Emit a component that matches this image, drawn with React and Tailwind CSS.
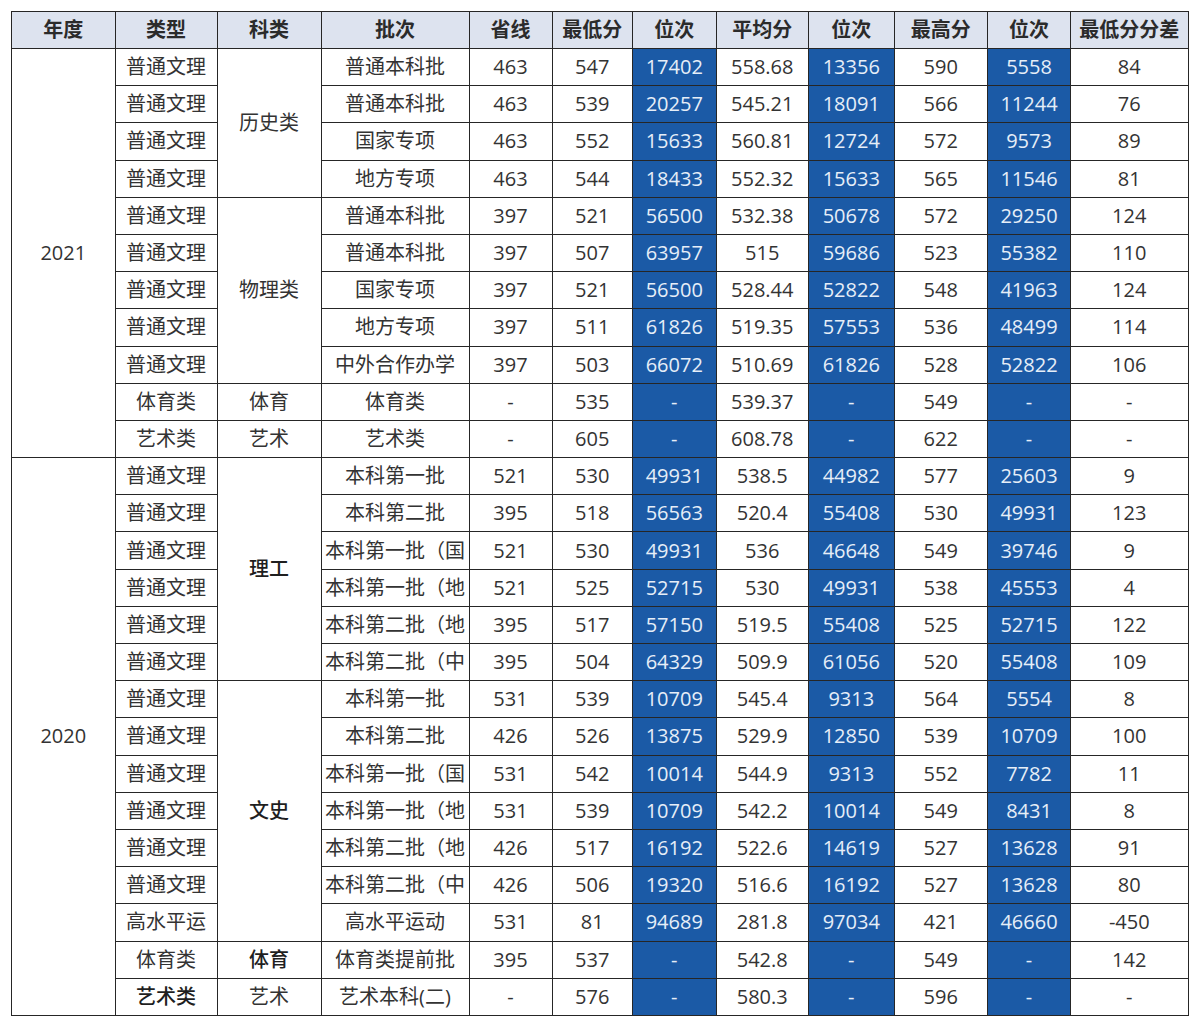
import React from "react";

// each row: [type, category|null (covered by rowspan), batch, line, min, rank1, avg, rank2, max, rank3, diff]
const rows2021 = [
  ["普通文理", { text: "历史类", span: 4 }, "普通本科批", "463", "547", "17402", "558.68", "13356", "590", "5558", "84"],
  ["普通文理", null, "普通本科批", "463", "539", "20257", "545.21", "18091", "566", "11244", "76"],
  ["普通文理", null, "国家专项", "463", "552", "15633", "560.81", "12724", "572", "9573", "89"],
  ["普通文理", null, "地方专项", "463", "544", "18433", "552.32", "15633", "565", "11546", "81"],
  ["普通文理", { text: "物理类", span: 5 }, "普通本科批", "397", "521", "56500", "532.38", "50678", "572", "29250", "124"],
  ["普通文理", null, "普通本科批", "397", "507", "63957", "515", "59686", "523", "55382", "110"],
  ["普通文理", null, "国家专项", "397", "521", "56500", "528.44", "52822", "548", "41963", "124"],
  ["普通文理", null, "地方专项", "397", "511", "61826", "519.35", "57553", "536", "48499", "114"],
  ["普通文理", null, "中外合作办学", "397", "503", "66072", "510.69", "61826", "528", "52822", "106"],
  ["体育类", { text: "体育", span: 1 }, "体育类", "-", "535", "-", "539.37", "-", "549", "-", "-"],
  ["艺术类", { text: "艺术", span: 1 }, "艺术类", "-", "605", "-", "608.78", "-", "622", "-", "-"],
];

const rows2020 = [
  ["普通文理", { text: "理工", span: 6, bold: true }, "本科第一批", "521", "530", "49931", "538.5", "44982", "577", "25603", "9"],
  ["普通文理", null, "本科第二批", "395", "518", "56563", "520.4", "55408", "530", "49931", "123"],
  ["普通文理", null, "本科第一批（国", "521", "530", "49931", "536", "46648", "549", "39746", "9"],
  ["普通文理", null, "本科第一批（地", "521", "525", "52715", "530", "49931", "538", "45553", "4"],
  ["普通文理", null, "本科第二批（地", "395", "517", "57150", "519.5", "55408", "525", "52715", "122"],
  ["普通文理", null, "本科第二批（中", "395", "504", "64329", "509.9", "61056", "520", "55408", "109"],
  ["普通文理", { text: "文史", span: 7, bold: true }, "本科第一批", "531", "539", "10709", "545.4", "9313", "564", "5554", "8"],
  ["普通文理", null, "本科第二批", "426", "526", "13875", "529.9", "12850", "539", "10709", "100"],
  ["普通文理", null, "本科第一批（国", "531", "542", "10014", "544.9", "9313", "552", "7782", "11"],
  ["普通文理", null, "本科第一批（地", "531", "539", "10709", "542.2", "10014", "549", "8431", "8"],
  ["普通文理", null, "本科第二批（地", "426", "517", "16192", "522.6", "14619", "527", "13628", "91"],
  ["普通文理", null, "本科第二批（中", "426", "506", "19320", "516.6", "16192", "527", "13628", "80"],
  ["高水平运", null, "高水平运动", "531", "81", "94689", "281.8", "97034", "421", "46660", "-450"],
  ["体育类", { text: "体育", span: 1, bold: true }, "体育类提前批", "395", "537", "-", "542.8", "-", "549", "-", "142"],
  [{ text: "艺术类", bold: true }, { text: "艺术", span: 1 }, "艺术本科(二)", "-", "576", "-", "580.3", "-", "596", "-", "-"],
];

const headers = ["年度", "类型", "科类", "批次", "省线", "最低分", "位次", "平均分", "位次", "最高分", "位次", "最低分分差"];

const cell = "border border-[#262626] text-center align-middle whitespace-nowrap overflow-hidden p-0";
const blue = "bg-[#1b5aa6] text-[#e6eef8]";

function Block({ year, rows }) {
  return rows.map((r, i) => {
    const type = typeof r[0] === "string" ? { text: r[0] } : r[0];
    const cat = r[1];
    const rest = r.slice(2);
    return (
      <tr key={year + i} className="h-[37.2px]">
        {i === 0 && (
          <td rowSpan={rows.length} className={cell}>
            {year}
          </td>
        )}
        <td className={`${cell} ${type.bold ? "font-medium text-[#1f1f1f]" : ""}`}>{type.text}</td>
        {cat && (
          <td rowSpan={cat.span} className={`${cell} ${cat.bold ? "font-medium text-[#1f1f1f]" : ""}`}>
            {cat.text}
          </td>
        )}
        {rest.map((v, j) => (
          <td key={j} className={`${cell} ${j === 3 || j === 5 || j === 7 ? blue : ""}`}>
            {v}
          </td>
        ))}
      </tr>
    );
  });
}

export default function App() {
  return (
    <div className="bg-white w-[1200px] h-[1027px] pt-[11px] pl-[11px] font-['Open_Sans','Noto_Sans_CJK_SC',sans-serif] text-[20px] leading-none text-[#333]">
      <table className="table-fixed border-collapse w-[1177px] border-[1.5px] border-[#262626]">
        <colgroup>
          <col className="w-[103.5px]" />
          <col className="w-[102px]" />
          <col className="w-[104px]" />
          <col className="w-[148px]" />
          <col className="w-[83px]" />
          <col className="w-[80.5px]" />
          <col className="w-[83.5px]" />
          <col className="w-[92.5px]" />
          <col className="w-[85.5px]" />
          <col className="w-[93.5px]" />
          <col className="w-[83px]" />
          <col className="w-[117.5px]" />
        </colgroup>
        <thead>
          <tr className="h-[37px] bg-[#dde3ef]">
            {headers.map((h, i) => (
              <th key={i} className={`${cell} font-bold text-[#2b2b2b]`}>
                {h}
              </th>
            ))}
          </tr>
        </thead>
        <tbody>
          <Block year="2021" rows={rows2021} />
          <Block year="2020" rows={rows2020} />
        </tbody>
      </table>
    </div>
  );
}
